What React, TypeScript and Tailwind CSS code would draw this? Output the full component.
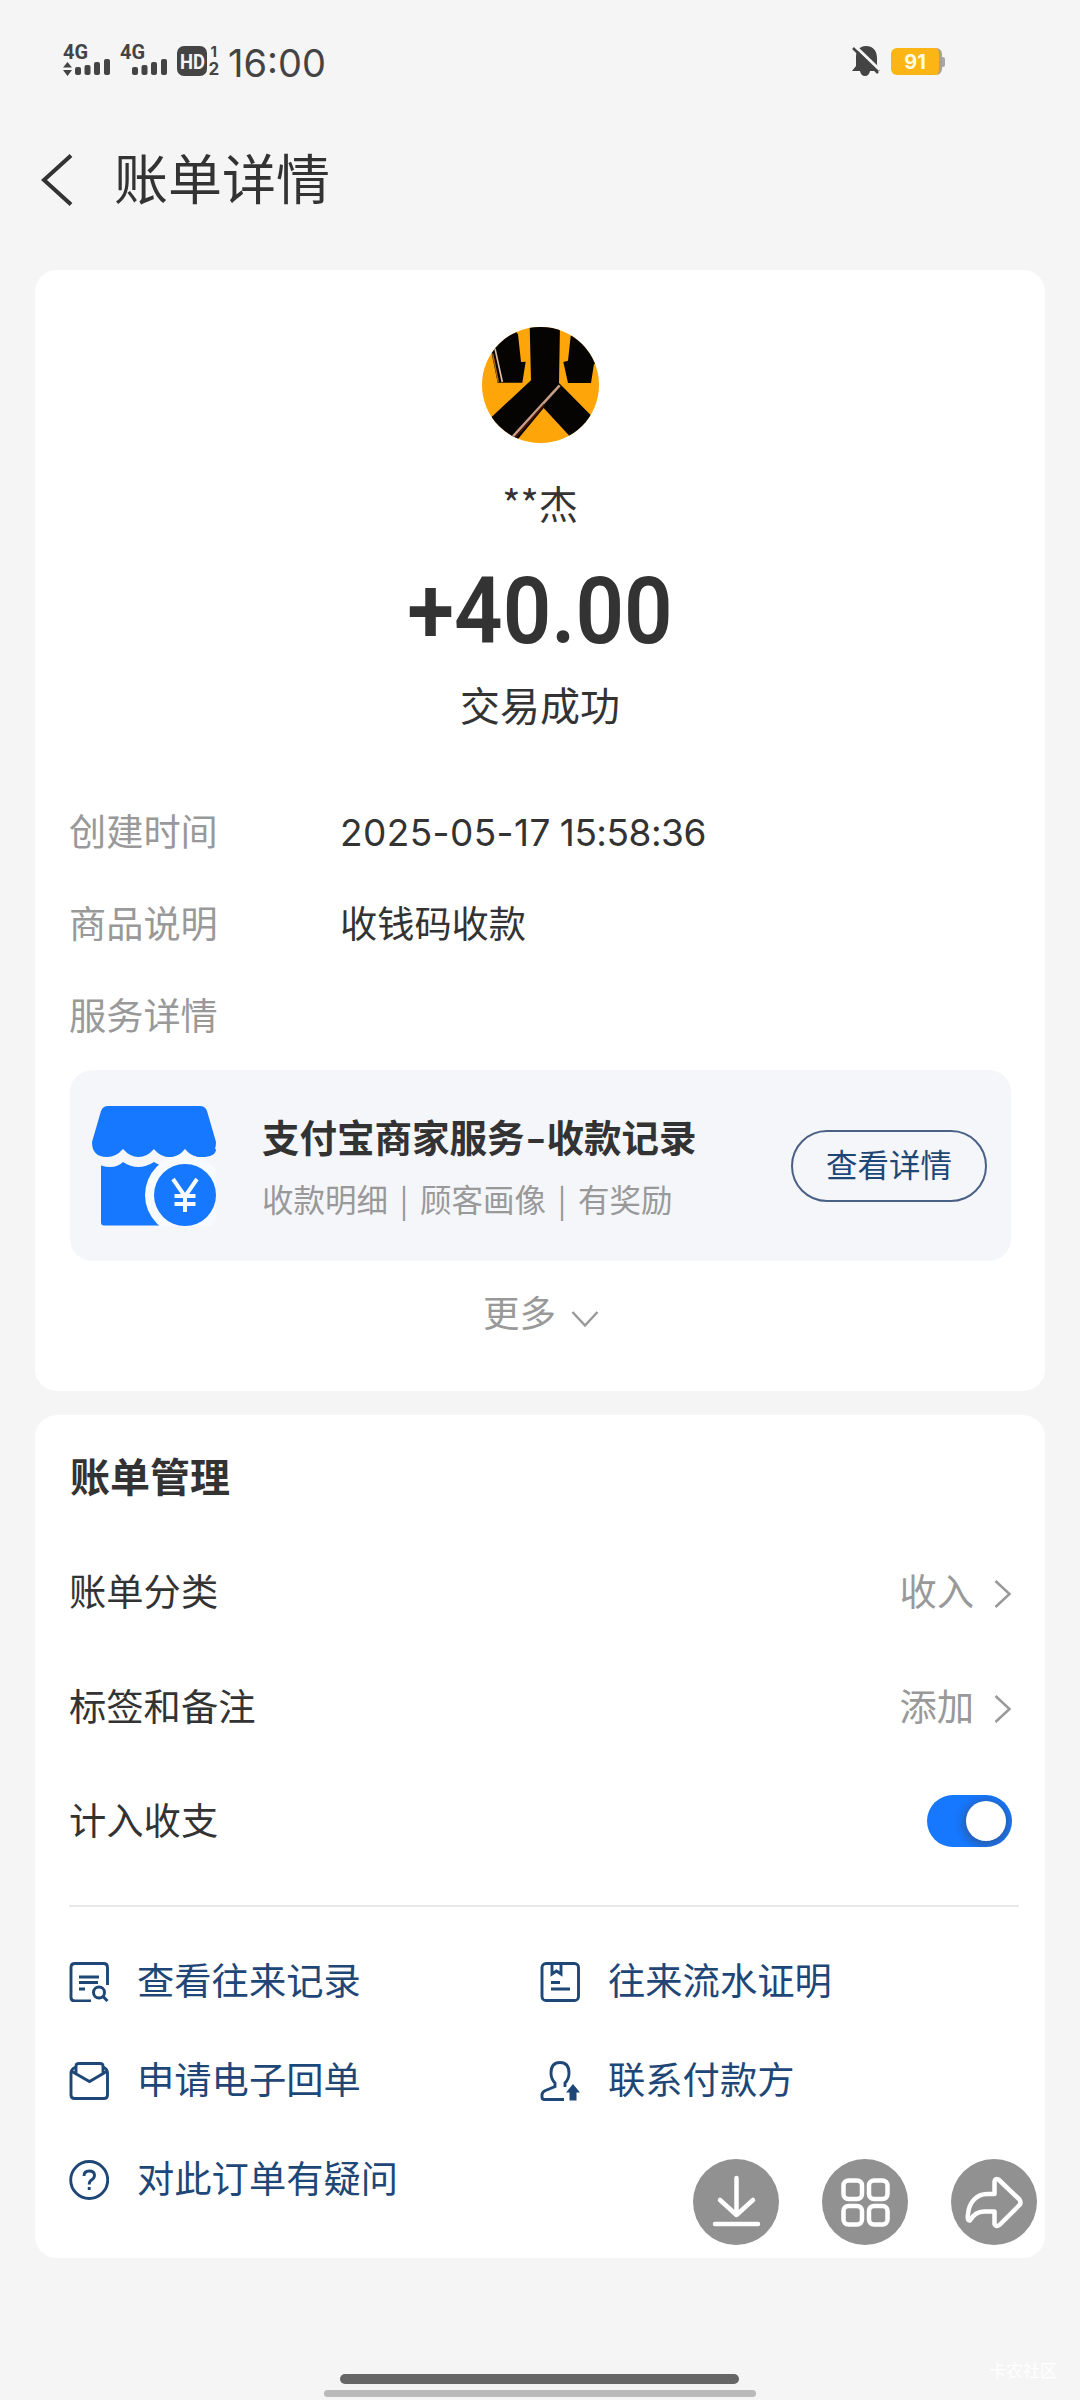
import type { ReactNode } from "react";

const CJK = "font-['Noto_Sans_CJK_SC','Noto_Sans',sans-serif]";

function StatusBar() {
  return (
    <div className="flex h-[120px] items-start text-[#444]">
      <svg className="ml-[62px] mt-[30px]" width="50" height="48" viewBox="62 30 50 48" fill="#444">
        <text x="63" y="58.500" fontSize="20" fontWeight="700" textLength="25" lengthAdjust="spacingAndGlyphs" fontFamily="Roboto">4G</text>
        <path d="M63 67.500l4.500-5.500 4.500 5.500zM63 70h9l-4.500 6z" />
        <rect x="75" y="67" width="6" height="8" rx="2" />
        <rect x="84.500" y="65" width="6" height="10" rx="2" />
        <rect x="94" y="62" width="6" height="13" rx="2" />
        <rect x="104" y="59" width="6" height="16" rx="2" />
      </svg>
      <svg className="ml-[7px] mt-[30px]" width="50" height="48" viewBox="119 30 50 48" fill="#444">
        <text x="120" y="58.500" fontSize="20" fontWeight="700" textLength="25" lengthAdjust="spacingAndGlyphs" fontFamily="Roboto">4G</text>
        <rect x="132" y="67" width="6" height="8" rx="2" />
        <rect x="141.500" y="65" width="6" height="10" rx="2" />
        <rect x="151" y="62" width="6" height="13" rx="2" />
        <rect x="161" y="59" width="6" height="16" rx="2" />
      </svg>
      <svg className="ml-[8px] mt-[36px]" width="44" height="46" viewBox="177 36 44 46" fill="#444">
        <rect x="177" y="46" width="30" height="30" rx="7" />
        <text x="180" y="68.500" fill="#f5f5f5" fontSize="21" fontWeight="700" textLength="25" lengthAdjust="spacingAndGlyphs" fontFamily="Roboto">HD</text>
        <text x="210.500" y="57" fontSize="15" fontWeight="700" fontFamily="Inter">1</text>
        <text x="208.500" y="75" fontSize="17" fontWeight="700" fontFamily="Inter">2</text>
      </svg>
      <div className="ml-[7px] mt-[40px] h-[48px] w-[100px] whitespace-nowrap font-['Inter'] text-[38px] leading-[47px]">16:00</div>
      <svg className="ml-[522px] mt-[44px]" width="32" height="34" viewBox="850 44 32 34">
        <path d="M866 46c8 0 11 6 11 12v7l3 6H870q-1 5-5 5t-5-5H852l4-5V57c0-6 3-11 10-11z" fill="#444" />
        <path d="M855 46l25 24" stroke="#f5f5f5" strokeWidth="3" />
        <path d="M853 48l25 25" stroke="#444" strokeWidth="2.5" />
      </svg>
      <div className="ml-[9px] mt-[48px] flex items-center">
        <div className="flex h-[27px] w-[51px] items-center justify-center rounded-[6px] border-r-[3px] border-[#a9a28c] bg-[#fbb615] font-['Inter'] text-[20px] font-bold leading-none text-[#fffbe0]">91</div>
        <div className="h-[10px] w-[3px] rounded-r-[2px] bg-[#a8a8a8]" />
      </div>
    </div>
  );
}

function Header() {
  return (
    <div className="flex h-[150px] items-start">
      <svg className="ml-[40px] mt-[33px]" width="34" height="54" viewBox="40 153 34 54" fill="none" stroke="#333" strokeWidth="4">
        <path d="M71 155.500L44 180l27 24.500" />
      </svg>
      <h1 className="ml-[40px] mt-[17px] text-[54px] leading-[80px] text-[#333]">账单详情</h1>
    </div>
  );
}

function Avatar() {
  return (
    <svg className="mx-auto block h-[116px] w-[117px] rounded-full" viewBox="305 80 351 348">
      <rect x="300" y="75" width="360" height="360" fill="#fea50a" />
      <g fill="#060303">
        <path d="M448 75H539L536 248L645 358L578 418L490 323L410 420L325 358L452 240Z" />
        <path d="M335 165L330 130L400 85L413 102L422 185L436 184L426 247H352Z" />
        <path d="M571 108L580 90L660 130L656 200L641 190L632 248H563L549 185L563 181Z" />
      </g>
      <path d="M538 255L398 408" stroke="#c79c84" strokeWidth="8" />
      <path d="M492 313L404 412" stroke="#4a1500" strokeWidth="5" />
      <path d="M344 145L366 245" stroke="#dcc0a8" strokeWidth="5" />
      <path d="M337 160L354 245" stroke="#b86a00" strokeWidth="4" />
    </svg>
  );
}

function StoreIcon() {
  return (
    <svg className="ml-[22px] shrink-0" width="124" height="120" viewBox="0 0 124 120" fill="#1677ff">
      <path d="M16 0H108Q113 0 115 5L124 36Q124 51 109 51Q100 51 93 43Q86 51 77.500 51Q69 51 62 43Q55 51 46.500 51Q38 51 31 43Q24 51 15 51Q0 51 0 36L9 5Q11 0 16 0Z" />
      <path d="M9 59.500Q23 64 31 56Q46 66 62 56Q66 59 72 60V119.500H12Q9 119.500 9 116.500Z" />
      <circle cx="93" cy="89" r="40" fill="#f7fafe" />
      <path d="M62 43H124Q124 51 109 51Q100 51 93 43Q86 51 77.500 51Q69 51 62 43Z" />
      <path d="M84.500 51Q89 49 93 43Q97 49 102 51Z" fill="#f7fafe" />
      <circle cx="93" cy="89" r="31" />
      <path d="M81 73l12 17.500 12-17.500M93 90v16M82.500 90h21M82.500 98h21" fill="none" stroke="#f5faff" strokeWidth="4" />
    </svg>
  );
}

function InfoRow({ label, children }: { label: string; children?: ReactNode }) {
  return (
    <div className="flex h-[92px] items-center text-[37.200px]">
      <span className="-ml-px w-[271px] text-[#999]">{label}</span>
      {children}
    </div>
  );
}

function ServiceBox() {
  return (
    <div className="mt-[9px] flex h-[191px] w-[941px] items-center rounded-[22px] bg-[#f5f6fa]">
      <StoreIcon />
      <div className="ml-[46px] mt-[6px] w-[530px] shrink-0 whitespace-nowrap">
        <div className="text-[37.500px] font-bold leading-[60px] text-[#333]">支付宝商家服务<span className="inline-block w-[22px] scale-x-[1.500] text-center">-</span>收款记录</div>
        <div className="text-[31.500px] leading-[65px] text-[#999]">
          收款明细<span className="inline-block w-[32px] text-center">|</span>顾客画像<span className="inline-block w-[32px] text-center">|</span>有奖励
        </div>
      </div>
      <button className="-ml-px flex h-[72px] w-[196px] items-center justify-center rounded-full border-2 border-[#4a6085] pb-[3px] text-[31.500px] leading-none text-[#1e4777]">
        查看详情
      </button>
    </div>
  );
}

function BillCard() {
  return (
    <section className="mx-[35px] h-[1121px] rounded-[22px] bg-white pl-[35px] pt-[57px]">
      <div className="mr-[35px] text-center text-[#333]">
        <Avatar />
        <div className="mt-[29px] h-[60px] text-[39px] leading-[60px]">**杰</div>
        <div className="mt-[30px] h-[100px] origin-center scale-x-[0.915] font-['Roboto'] text-[93px] font-semibold leading-[100px]">+40.00</div>
        <div className="mt-[12px] h-[60px] text-[40px] leading-[60px]">交易成功</div>
      </div>
      <div className="mt-[51px]">
        <InfoRow label="创建时间">
          <span className="mt-[4px] flex gap-[9px] whitespace-nowrap font-['Inter'] text-[37px] text-[#333]">
            <span className="tracking-[0.4px]">2025-05-17</span>
            <span className="tracking-[-0.5px]">15:58:36</span>
          </span>
        </InfoRow>
        <InfoRow label="商品说明">
          <span className="text-[#333]">收钱码收款</span>
        </InfoRow>
        <InfoRow label="服务详情" />
      </div>
      <ServiceBox />
      <div className="mr-[33px] mt-[21px] flex h-[60px] items-center justify-center text-[36.500px] text-[#999]">
        更多
        <svg className="ml-[15px] mt-[14px]" width="28" height="18" viewBox="0 0 28 18" fill="none" stroke="#999" strokeWidth="2.500">
          <path d="M1.500 2L14 15.500L26.500 2" />
        </svg>
      </div>
    </section>
  );
}

function SettingRow({ label, children }: { label: string; children: ReactNode }) {
  return (
    <div className="-ml-px flex h-[114.500px] items-center justify-between pr-[33px] text-[37.300px] text-[#333]">
      <span>{label}</span>
      <span className="flex items-center text-[#999]">{children}</span>
    </div>
  );
}

function Chevron() {
  return (
    <svg className="ml-[20px] mt-[6px]" width="18" height="30" viewBox="0 0 18 30" fill="none" stroke="#999" strokeWidth="2.500">
      <path d="M1.500 2L15.500 15L1.500 28" />
    </svg>
  );
}

function Link({ icon, label }: { icon: ReactNode; label: string }) {
  return (
    <div className="flex h-[99px] items-center text-[37.300px] text-[#1e4777]">
      <svg className="-ml-[1px] mt-[3px] shrink-0" width="40" height="40" viewBox="0 0 40 40" fill="none" stroke="#1e4777" strokeWidth="2.900">
        {icon}
      </svg>
      <span className="ml-[28px]">{label}</span>
    </div>
  );
}

function ManageCard() {
  return (
    <section className="mx-[35px] mt-[24px] h-[843px] rounded-[22px] bg-white pl-[35px] pt-[20px]">
      <h2 className="h-[80px] text-[40px] font-bold leading-[80px] text-[#333]">账单管理</h2>
      <div className="mt-[19px]">
        <SettingRow label="账单分类">收入<Chevron /></SettingRow>
        <SettingRow label="标签和备注">添加<Chevron /></SettingRow>
        <SettingRow label="计入收支">
          <span className="mt-[2px] flex h-[52px] w-[85px] items-center justify-end rounded-full bg-[#1677ff] pr-[6px]">
            <span className="size-[40px] rounded-full bg-white shadow-[0_2px_8px_3px_rgba(60,70,90,0.5)] [clip-path:inset(-6px_-6px_-6px_-12px_round_26px)]" />
          </span>
        </SettingRow>
      </div>
      <div className="-ml-px mr-[26px] mt-[27px] h-[2px] bg-[#e8e8e8]" />
      <div className="mt-[24px] grid grid-cols-[471px_1fr]">
        <Link label="查看往来记录" icon={<>
          <path d="M38.500 23V5.500Q38.500 1.500 34.500 1.500H6Q2 1.500 2 5.500V35.500Q2 39 6 39H22" />
          <path d="M10 15H30M10 20.500H29M10 27H16" />
          <circle cx="30" cy="30.500" r="5.500" strokeWidth="3" />
          <path d="M33.500 34L38.500 39" strokeWidth="3" />
        </>} />
        <Link label="往来流水证明" icon={<>
          <rect x="2" y="1.500" width="36.500" height="37" rx="4" />
          <path d="M12 2V12L16.500 9L21 12V2M11 20.500H20M11 27H30" />
        </>} />
        <Link label="申请电子回单" icon={<>
          <path d="M7 6Q2 8 2 12V34Q2 37.500 5.500 37.500H35Q38.500 37.500 38.500 34V12Q38.500 8 34 6" />
          <path d="M7 12V5Q7 2.500 10 2.500H31Q34 2.500 34 5V12M2 10L20.500 20.500L38.500 10" />
        </>} />
        <Link label="联系付款方" icon={<>
          <path d="M24 38.500H4.500Q2 38.500 2 36V34Q2 31 5.500 29.500L15 25.500V22Q11 18 11 12Q11 1.500 20 1.500Q29 1.500 29 12Q29 18 25 22V26" />
          <path d="M33 23L40 31.500H36.500V39.500H29.500V31.500H26Z" fill="#1e4777" stroke="none" />
        </>} />
        <Link label="对此订单有疑问" icon={<>
          <circle cx="20.200" cy="20" r="18.500" />
          <path d="M15 16Q15 11 20.200 11Q25.500 11 25.500 15.500Q25.500 18 22.500 20Q20.200 21.500 20.200 24.500M20.200 27V30" />
        </>} />
      </div>
    </section>
  );
}

function FloatingActions() {
  const round = "flex size-[86px] items-center justify-center rounded-full bg-[#919191]";
  return (
    <div className="absolute left-[693px] top-[2159px] flex gap-[43px]">
      <div className={round}>
        <svg width="86" height="86" viewBox="0 0 86 86" fill="none" stroke="white" strokeWidth="4.500" strokeLinecap="round" strokeLinejoin="round">
          <path d="M43.500 19V55M27 41L43.500 56L60 41M22 65H65" />
        </svg>
      </div>
      <div className={round}>
        <svg width="86" height="86" viewBox="0 0 86 86" fill="none" stroke="white" strokeWidth="4.500">
          <rect x="21.500" y="21.500" width="18.500" height="18.500" rx="5" />
          <rect x="47" y="21.500" width="18.500" height="18.500" rx="5" />
          <rect x="21.500" y="47" width="18.500" height="18.500" rx="5" />
          <rect x="47" y="47" width="18.500" height="18.500" rx="5" />
        </svg>
      </div>
      <div className={round}>
        <svg width="86" height="86" viewBox="0 0 86 86" fill="none" stroke="white" strokeWidth="4.500" strokeLinejoin="round">
          <path d="M43.500 35V22.500Q44 19 47.500 20.500L68.500 40.500Q70.500 43.500 68.500 46L48.500 66Q45 68.500 43.500 65V52.500H33Q24 52.500 19 61.500Q16 62 17 55C18 43 26 35 36 35Z" />
        </svg>
      </div>
    </div>
  );
}

export default function App() {
  return (
    <main className={`relative flex h-[2400px] w-[1080px] flex-col overflow-hidden bg-[#f5f5f5] ${CJK}`}>
      <StatusBar />
      <Header />
      <BillCard />
      <ManageCard />
      <FloatingActions />
      <footer className="relative mt-[116px]">
        <div className="ml-[340px] h-[10px] w-[399px] rounded-full bg-[#666]" />
        <div className="ml-[324px] mt-[6px] h-[7px] w-[432px] rounded-full bg-[#bababa]" />
        <span className="absolute -top-[16px] left-[989px] text-[17px] leading-[24px] text-white">卡农社区</span>
      </footer>
    </main>
  );
}
